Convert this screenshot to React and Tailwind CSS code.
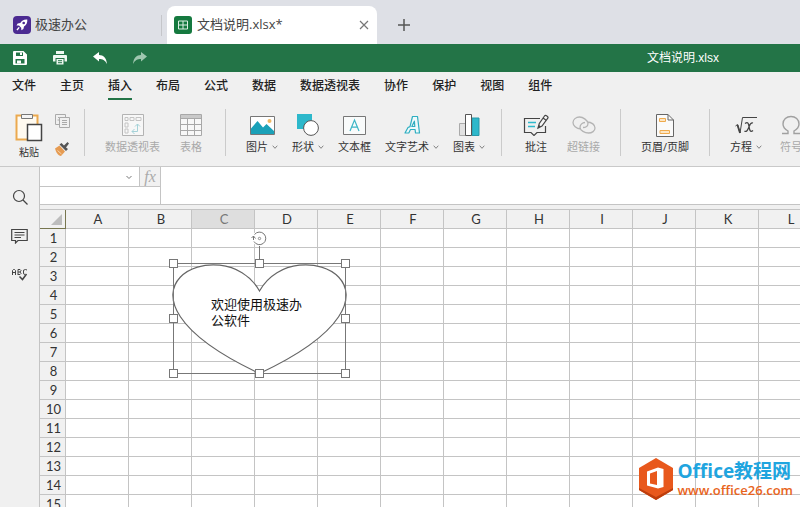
import React from "react";

const menus = ["文件", "主页", "插入", "布局", "公式", "数据", "数据透视表", "协作", "保护", "视图", "组件"];
const columns = ["A", "B", "C", "D", "E", "F", "G", "H", "I", "J", "K", "L"];
const rows = Array.from({ length: 15 }, (_, i) => i + 1);

function Icon({ w, h, children, className = "" }) {
  return (
    <svg aria-hidden="true" width={w} height={h} viewBox={`0 0 ${w} ${h}`} fill="none" className={`shrink-0 ${className}`}>
      {children}
    </svg>
  );
}

function Chevron() {
  return (
    <Icon w={6} h={6}>
      <path d="M.7 1.7 3 4.3 5.3 1.7" stroke="#777" strokeWidth=".9" />
    </Icon>
  );
}

function Tool({ label, icon, menu, disabled }) {
  return (
    <button
      type="button"
      disabled={disabled}
      className="flex shrink-0 flex-col items-center text-[11px] leading-4 text-[#333] disabled:text-[#a9a9a9]"
    >
      <span className="flex h-7 items-center">{icon}</span>
      <span className="flex items-center gap-1 whitespace-nowrap">
        {label}
        {menu && <Chevron />}
      </span>
    </button>
  );
}

function Group({ className, children }) {
  return <div className={`flex shrink-0 items-start border-l border-[#cbcbcb] pt-0.5 ${className}`}>{children}</div>;
}

const icons = {
  pivot: (
    <Icon w={22} h={22}>
      <path d="M.5.5h21v21H.5z" stroke="#b3b3b3" fill="#f7f7f7" />
      <path d="M3 3.500h3v3H3zM8 3.500h4v3H8zM14 3.500h5v3h-5zM3 9h3v4H3zM3 15h3v4H3z" stroke="#c4c4c4" />
      <path d="M10 17.500h5.500V10M13 12.500l2.500-2.500 2.500 2.500M12.500 15l-2.500 2.500 2.500 2.500" stroke="#a5d2d8" />
    </Icon>
  ),
  table: (
    <Icon w={22} h={22}>
      <path d="M.5.5h21v21H.5z" stroke="#a8a8a8" fill="#f8f8f8" />
      <path d="M1 1h20v3H1z" fill="#c9c9c9" />
      <path d="M.5 4.500h21M.5 10.500h21M.5 16.500h21M7.500 4.500v17M14.500 4.500v17" stroke="#a8a8a8" />
    </Icon>
  ),
  image: (
    <Icon w={25} h={19}>
      <path d="M.5.5h24v18H.5z" stroke="#777" fill="#fff" />
      <circle cx="19.500" cy="5" r="2" fill="#efb863" />
      <path d="M1 12.500 7.500 5l5.500 6.500 3.500-3.500 7.500 7v3H1z" fill="#1ba1b8" />
    </Icon>
  ),
  shape: (
    <Icon w={22} h={22}>
      <path d="M0 0h15v15H0z" fill="#2db8cb" />
      <circle cx="14" cy="14" r="7.400" fill="#fff" stroke="#555" />
    </Icon>
  ),
  textbox: (
    <Icon w={23} h={19}>
      <path d="M.5.5h22v18H.5z" stroke="#777" fill="#f9fbfb" />
      <path d="m7 15 4.500-11L16 15M8.500 11.200h6" stroke="#3bb5c6" strokeWidth="1.200" />
    </Icon>
  ),
  wordart: (
    <Icon w={17} h={20}>
      <path
        d="M8.500 1.500h5L15.500 18h-4l-.4-3.500H6.500L4.800 18H1l3-5.500 2-.9zM7.800 11.500h3l-.4-5.300z"
        stroke="#2eaec1"
        strokeWidth="1.200"
        strokeLinejoin="round"
        fill="#eefafb"
      />
    </Icon>
  ),
  chart: (
    <Icon w={21} h={22}>
      <path d="M.5 9.500h6v12h-6z" fill="#e1e1e1" stroke="#aaa" />
      <path d="M13 4h7v17.500h-7z" fill="#2db8cb" stroke="#2698aa" />
      <path d="M6.500.5h6v21h-6z" fill="#fff" stroke="#555" />
    </Icon>
  ),
  comment: (
    <Icon w={26} h={22}>
      <path d="M17 4.500H1.500v14H8l3 3 3-3h8.500V12" stroke="#444" strokeWidth="1.200" />
      <path d="M5 8.500h8M5 12.500h7" stroke="#2db8cb" strokeWidth="1.500" />
      <path d="m15 14 1.300-4.500L21.500 2c1-1.400 4.300.6 3.300 2.200L19 12zM20 4l3.500 2.500" stroke="#444" strokeWidth="1.200" fill="#f5f5f5" />
      <path d="m15 14 1-3 2 1.500z" fill="#444" />
    </Icon>
  ),
  link: (
    <Icon w={24} h={20}>
      <path
        d="M9 14C4 13.500 1 10.500 1 7.500S4 2 7.500 2 16 5.500 16 8.500s-3 4-5 4M15 7c5 0 8 3 8 6s-3 5-6.500 5S8 15.500 8 12.500s2.500-5 5-5"
        stroke="#b4b4b4"
        strokeWidth="1.300"
      />
    </Icon>
  ),
  header: (
    <Icon w={18} h={23}>
      <path d="M.5.5h11.500l5.500 5.500v16.500H.5z" stroke="#666" fill="#fafafa" />
      <path d="M12 .5V6h5.500" stroke="#666" />
      <path d="M3.500 4.500h6v3h-6zM4 16.500h9.500v3H4z" stroke="#efaa4c" fill="#fde6c4" />
    </Icon>
  ),
  equation: (
    <Icon w={22} h={20}>
      <path d="m.5 11 2-1.500L5 18 7.500 2.500H22" stroke="#444" />
      <path d="m2.500 10 2.500 8" stroke="#444" strokeWidth="1.800" />
      <path d="M10 8.500c3-2 3.500 0 4 3s1 6.500 4 4M18 8c-3-1-3.500 3-4.500 5s-2 4.500-4 3" stroke="#444" strokeWidth="1.300" />
    </Icon>
  ),
  omega: (
    <Icon w={20} h={20}>
      <path d="M1 18.500h6v-2.500C3.500 14 2 12 2 9c0-4.500 3.500-7.500 8-7.500s8 3 8 7.500c0 3-1.500 5-5 7v2.500h6" stroke="#a0a0a0" strokeWidth="1.400" />
    </Icon>
  ),
};

function TabBar() {
  return (
    <header className="flex h-11 shrink-0 items-end bg-[#dee0e6] text-[13px] text-[#444]">
      <div className="flex h-[38px] w-[167px] items-center gap-1 pl-[13px]">
        <Icon w={18} h={18}>
          <rect width="18" height="18" rx="4" fill="#4b2a91" />
          <path d="M14.300 3.500c-3.500-.3-5.500 1-7 3.400l-2.600.5-1.200 2 2.500.2 2.200 2.200.2 2.500 2-1.200.6-2.700c2.300-1.500 3.600-3.400 3.300-6.900z" fill="#fff" />
          <circle cx="10.700" cy="7" r="1.300" fill="#4b2a91" />
          <path d="m4 14 2.200-2.600" stroke="#fff" strokeWidth="1.400" />
        </Icon>
        <span className="grow">极速办公</span>
        <span className="mr-[5px] h-[21px] w-px bg-[#c5c6ca]" />
      </div>
      <div className="flex h-[38px] w-[210px] items-center gap-[5px] rounded-t-lg bg-white pr-2 pl-[7px]">
        <Icon w={18} h={18}>
          <rect width="18" height="18" rx="3" fill="#15793f" />
          <path d="M4.500 5h9v8h-9zM9 5v8M4.500 9h9" stroke="#dcefe3" />
        </Icon>
        <span className="grow">文档说明.xlsx*</span>
        <button type="button" aria-label="关闭标签">
          <Icon w={10} h={10}>
            <path d="m1 1 8 8M9 1 1 9" stroke="#777" strokeWidth="1.200" />
          </Icon>
        </button>
      </div>
      <button type="button" aria-label="新建标签" className="flex h-[38px] items-center pl-[21px]">
        <Icon w={12} h={12}>
          <path d="M6 0v12M0 6h12" stroke="#555" strokeWidth="1.500" />
        </Icon>
      </button>
    </header>
  );
}

function QuickBar() {
  return (
    <div className="flex h-7 shrink-0 items-center bg-[#237447] pr-[81px] pl-[13px]">
      <div className="flex items-center gap-[26px]">
        <button type="button" aria-label="保存">
          <Icon w={14} h={14}>
            <path fillRule="evenodd" d="M1 0h9.500L14 3.500V13a1 1 0 0 1-1 1H1a1 1 0 0 1-1-1V1a1 1 0 0 1 1-1zm2 1.500V5h7V1.500zM2.500 8v4.500h9V8z" fill="#fff" />
            <path d="M7 1.500h2V4H7zM4 9.500h4v3H4z" fill="#fff" />
          </Icon>
        </button>
        <button type="button" aria-label="打印">
          <Icon w={14} h={14}>
            <path d="M3 0h8v3H3zM1 4h12a1 1 0 0 1 1 1v5.500h-2.500V7h-9v3.500H0V5a1 1 0 0 1 1-1zM3.500 8h7v5.500h-7z" fill="#eef7f1" />
            <path d="M5 9.700h4M5 11.700h4" stroke="#237447" />
          </Icon>
        </button>
        <button type="button" aria-label="撤销">
          <Icon w={14} h={12}>
            <path d="M0 4.500 6 0v3c4.500 0 7.500 3 8 9-2-3.800-4.500-5-8-5v2.500z" fill="#fff" />
          </Icon>
        </button>
        <button type="button" aria-label="重做">
          <Icon w={14} h={12}>
            <path d="M14 4.500 8 0v3C3.500 3 .5 6 0 12c2-3.800 4.500-5 8-5v2.500z" fill="#9fc7af" />
          </Icon>
        </button>
      </div>
      <h1 className="ml-auto font-['Liberation_Sans','Noto_Sans_CJK_SC',sans-serif] text-xs text-white">文档说明.xlsx</h1>
    </div>
  );
}

function Ribbon() {
  return (
    <div className="flex h-[66px] shrink-0 items-stretch overflow-hidden border-b border-[#c9c9c9] pt-2 pb-2.5">
      <div className="flex w-[84px] shrink-0 gap-3 pt-1 pl-[15px]">
        <button type="button" className="flex flex-col items-center gap-0.5 text-[10px] leading-4 text-[#333]">
          <Icon w={28} h={29}>
            <path d="M1.500 2.500h21v24h-21z" fill="#fffaf0" stroke="#eba94f" strokeWidth="2" />
            <path d="M6.500 1.500h11v4h-11z" fill="#f4f4f4" stroke="#777" />
            <path d="M12.500 11.500h14v16h-14z" fill="#fff" stroke="#444" strokeWidth="1.500" />
          </Icon>
          <span>粘贴</span>
        </button>
        <div className="flex flex-col gap-3">
          <button type="button" disabled aria-label="复制">
            <Icon w={16} h={16}>
              <path d="M4.500 11.500H.5v-10h10V4" stroke="#aaa" />
              <path d="M4.500 4.500h10v10h-10zM7 7.500h5M7 9.500h5M7 11.500h5M3 4.500h1.500M2.500 7h2" stroke="#aaa" />
            </Icon>
          </button>
          <button type="button" aria-label="格式刷">
            <Icon w={16} h={16}>
              <path d="m0 7.500 4.500-3 5.500 6-4 4.500c-3 0-5-4-6-7.500z" fill="#e69b52" />
              <path d="m2.500 9.500 4 3.500" stroke="#f5d3aa" />
              <path d="m4.500 3.500 2-1.500 2.500 2.500L12.500 1 14 2.500 11 6.500 13 8l-2 2z" fill="#555" />
            </Icon>
          </button>
        </div>
      </div>
      <Group className="gap-5 pr-[23px] pl-5">
        <Tool label="数据透视表" icon={icons.pivot} disabled />
        <Tool label="表格" icon={icons.table} disabled />
      </Group>
      <Group className="gap-3.5 pr-4 pl-5">
        <Tool label="图片" icon={icons.image} menu />
        <Tool label="形状" icon={icons.shape} menu />
        <Tool label="文本框" icon={icons.textbox} />
        <Tool label="文字艺术" icon={icons.wordart} menu />
        <Tool label="图表" icon={icons.chart} menu />
      </Group>
      <Group className="gap-[18px] pr-5 pl-[21px]">
        <Tool label="批注" icon={icons.comment} />
        <Tool label="超链接" icon={icons.link} disabled />
      </Group>
      <Group className="pr-5 pl-5">
        <Tool label="页眉/页脚" icon={icons.header} />
      </Group>
      <Group className="gap-[18px] pl-5">
        <Tool label="方程" icon={icons.equation} menu />
        <Tool label="符号" icon={icons.omega} disabled />
      </Group>
    </div>
  );
}

function SideBar() {
  return (
    <aside className="flex w-10 shrink-0 flex-col items-center gap-[23px] border-r border-[#c4c4c4] pt-[22px]">
      <button type="button" aria-label="搜索">
        <Icon w={16} h={16}>
          <circle cx="7" cy="7" r="5.500" stroke="#444" strokeWidth="1.200" />
          <path d="m11 11 4.500 4.500" stroke="#444" strokeWidth="1.200" />
        </Icon>
      </button>
      <button type="button" aria-label="批注">
        <Icon w={17} h={16}>
          <path d="M.7 1.500h15.500v11H7L4.500 15v-2.500H.7z" stroke="#444" strokeWidth="1.200" />
          <path d="M3.500 4.500h10M3.500 7h10M3.500 9.500h6.500" stroke="#444" />
        </Icon>
      </button>
      <button type="button" aria-label="拼写检查">
        <Icon w={16} h={16}>
          <path d="M.5 8V3.500l1-1h1l1 1V8M.5 5.500h3M6 2.500V8M6 2.500h2l1 1-1 1.500H6M8 5l1 1.500L8 7.500H6M15 3l-1.500-.5-2 .7v3.600l1.500.7" stroke="#444" />
          <path d="m7.500 9.500 3 3 4-5.500" stroke="#444" strokeWidth="1.500" />
        </Icon>
      </button>
    </aside>
  );
}

function FormulaBar() {
  return (
    <div className="flex h-[38px] shrink-0 border-b border-[#c4c4c4] bg-white">
      <div className="w-[121px] shrink-0 border-r border-[#c4c4c4]">
        <div className="flex h-5 border-b border-[#c4c4c4]">
          <input aria-label="名称框" className="w-[85px] bg-white px-1 text-xs outline-none" />
          <button type="button" aria-label="名称列表" className="flex w-[15px] items-center border-r border-[#c4c4c4]">
            <Icon w={8} h={8}>
              <path d="m1.500 3 2.500 2.500L6.500 3" stroke="#777" />
            </Icon>
          </button>
          <button type="button" aria-label="插入函数" className="grow bg-[#f1f1f1] font-['Liberation_Serif',serif] text-base leading-none text-[#aaa] italic">
            fx
          </button>
        </div>
      </div>
      <input aria-label="编辑栏" className="min-w-0 grow bg-white px-2 text-xs outline-none" />
    </div>
  );
}

const handles = [[173, 263], [259, 263], [345, 263], [173, 318], [345, 318], [173, 373], [259, 373], [345, 373]];

function HeartShape() {
  return (
    <div className="absolute top-[18px] left-[125px] h-[152px] w-[190px] pt-[68px] pl-[46px]">
      <svg aria-hidden="true" viewBox="165 228 190 152" fill="none" className="absolute inset-0 h-full w-full">
        <path d="M259.500 291C295.300 226.800 435.100 291 259.500 373.500C83.900 291 223.700 226.800 259.500 291z" fill="#fff" stroke="#666" strokeWidth="1.200" />
        <path d="M173.500 263.500h172v110h-172zM259.500 245v18" stroke="#777" />
        <circle cx="259.500" cy="238.500" r="7.500" fill="#fff" />
        <path d="M254.500 234.500a6.300 6.300 0 1 1-.5 7M251.500 238l2-2 2 2.500M253.500 236v4" stroke="#777" />
        <circle cx="259.500" cy="238.500" r="1.200" stroke="#777" strokeWidth=".8" />
        {handles.map(([x, y]) => (
          <rect key={`${x}-${y}`} x={x - 3.5} y={y - 3.5} width="8" height="8" fill="#fff" stroke="#777" />
        ))}
      </svg>
      <p className="relative w-24 text-[13px] leading-4 text-[#111]">欢迎使用极速办公软件</p>
    </div>
  );
}

function Watermark() {
  return (
    <div className="absolute right-[7px] bottom-[6px] flex items-center gap-1">
      <Icon w={36} h={44}>
        <path d="M18 1 35 11v22L18 43 1 33V11z" fill="#e8581c" />
        <path d="M1 31v2l17 10 17-10v-2L18 40z" fill="#bd3d0c" />
        <path fillRule="evenodd" d="m9 14.500 11-4 5.500 1.500v18L20 31.500 9 28.500zm3 2v10l7 1.500V14z" fill="#fff" />
      </Icon>
      <div className="flex flex-col whitespace-nowrap">
        <strong className="font-['Open_Sans','Noto_Sans_CJK_SC',sans-serif] text-[19px] leading-[22px] font-bold text-[#1fa5df]">Office教程网</strong>
        <a href="#home" className="font-['Open_Sans',sans-serif] text-[13px] leading-4 font-semibold text-[#e8641c]">www.office26.com</a>
      </div>
    </div>
  );
}

function Sheet() {
  return (
    <div className="relative mt-1 min-h-0 grow overflow-hidden border-t border-[#c4c4c4] bg-white">
      <table className="w-[782px] table-fixed border-separate border-spacing-0 font-['Lato',sans-serif] text-[13px] leading-[18px] text-[#333]">
        <colgroup>
          <col className="w-[26px]" />
          {columns.map((c) => (
            <col key={c} className="w-[63px]" />
          ))}
        </colgroup>
        <thead>
          <tr>
            <th aria-label="全选" className="border-r border-b border-[#77764f] bg-[#f1f1f1] p-0">
              <Icon w={11} h={11} className="mr-[3px] ml-auto">
                <path d="M11 0v11H0z" fill="#bdbdbd" />
              </Icon>
            </th>
            {columns.map((c) => (
              <th
                key={c}
                scope="col"
                className={`border-r border-b border-[#c4c4c4] p-0 pl-0.5 font-normal ${c === "C" ? "bg-[#dedede] text-[#777]" : "bg-[#f1f1f1]"}`}
              >
                {c}
              </th>
            ))}
          </tr>
        </thead>
        <tbody>
          {rows.map((r) => (
            <tr key={r}>
              <th scope="row" className="border-r border-b border-[#c4c4c4] bg-[#f1f1f1] p-0 pl-0.5 font-normal">{r}</th>
              {columns.map((c) => (
                <td key={c} className="border-r border-b border-[#c4c4c4] p-0" />
              ))}
            </tr>
          ))}
        </tbody>
      </table>
      <HeartShape />
      <Watermark />
    </div>
  );
}

export default function App() {
  return (
    <div className="flex h-screen flex-col overflow-hidden bg-[#f0f0f0] font-['Open_Sans','Noto_Sans_CJK_SC',sans-serif]">
      <TabBar />
      <QuickBar />
      <nav className="flex h-[29px] shrink-0 gap-6 pl-3 text-xs font-medium text-[#222]">
        {menus.map((m) => (
          <button
            key={m}
            type="button"
            className={`h-7 shrink-0 border-b-2 pt-0.5 whitespace-nowrap ${m === "插入" ? "border-[#237447]" : "border-transparent"}`}
          >
            {m}
          </button>
        ))}
      </nav>
      <Ribbon />
      <div className="flex min-h-0 grow">
        <SideBar />
        <main className="flex min-w-0 grow flex-col">
          <FormulaBar />
          <Sheet />
        </main>
      </div>
    </div>
  );
}
